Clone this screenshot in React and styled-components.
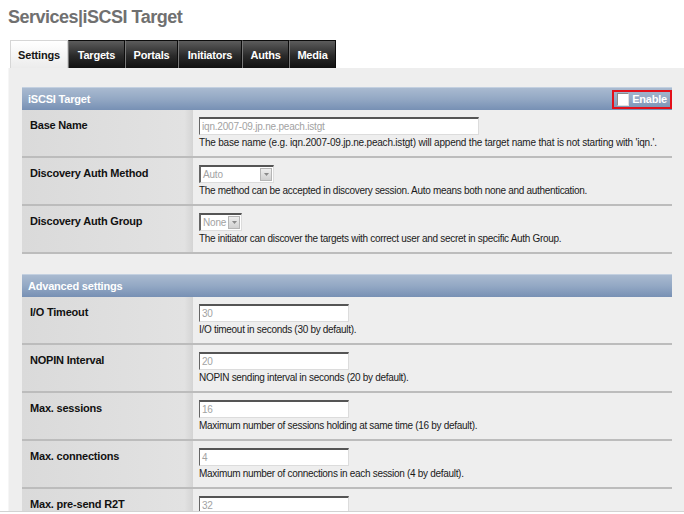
import { createGlobalStyle, styled } from "styled-components";

const GlobalStyle = createGlobalStyle`
  html, body {
    margin: 0;
    padding: 0;
    background: #fff;
  }
  body {
    font-family: "Liberation Sans", Arial, sans-serif;
  }
`;

const Page = styled.div`
  width: 684px;
  height: 512px;
  overflow: hidden;
  border-bottom: 1px solid #d2d2d2;
  box-sizing: border-box;
`;

const Title = styled.h1`
  margin: 0;
  padding: 7px 0 0 8px;
  height: 40px;
  box-sizing: border-box;
  font-size: 18px;
  letter-spacing: -0.5px;
  font-weight: bold;
  color: #707070;
`;

const TabBar = styled.div`
  display: flex;
  margin-left: 10px;
  height: 28px;
`;

const Tab = styled.div`
  display: flex;
  align-items: center;
  justify-content: center;
  width: ${(p) => p.$width}px;
  height: 28px;
  box-sizing: border-box;
  font-size: 11px;
  letter-spacing: -0.2px;
  font-weight: bold;
  color: ${(p) => (p.$active ? "#151515" : "#fff")};
  background: ${(p) =>
    p.$active
      ? "linear-gradient(#ffffff, #ececec)"
      : "linear-gradient(#5c5c5c, #2a2a2a 55%, #111111)"};
  border: 1px solid ${(p) => (p.$active ? "#d6d6d6" : "#0c0c0c")};
  border-bottom: none;
  border-left-color: ${(p) => (p.$active ? "#d6d6d6" : "#777")};
`;

const Panel = styled.div`
  margin-left: 8px;
  background: #eeeeee;
  border-left: 1px solid #f6f6f6;
  padding: 19px 12px 0 13px;
  height: 100%;
`;

const SectionHeader = styled.div`
  display: flex;
  align-items: center;
  justify-content: space-between;
  height: 22px;
  margin-top: ${(p) => (p.$gap ? "20px" : "0")};
  background: linear-gradient(#a9bad0, #93a8c4 50%, #7790b4);
  border-top: 1px solid #c3d0e0;
  color: #fff;
  font-size: 11px;
  letter-spacing: -0.2px;
  font-weight: bold;
  padding-left: 6px;
`;

const EnableBox = styled.label`
  display: flex;
  align-items: center;
  gap: 3px;
  height: 15px;
  padding: 0 3px 0 3px;
  border: 2px solid #e3101a;
  color: #fff;
  font-size: 11px;
  font-weight: bold;
`;

const CheckBox = styled.span`
  width: 10px;
  height: 11px;
  background: #fff;
  border: 1px solid #8a8a8a;
  border-right-color: #e0e0e0;
  border-bottom-color: #e0e0e0;
`;

const Row = styled.div`
  display: grid;
  grid-template-columns: 171px 1fr;
  border-bottom: 2px solid #bcbcbc;
`;

const Label = styled.div`
  padding: 9px 8px;
  font-size: 11px;
  letter-spacing: -0.2px;
  font-weight: bold;
  color: #111;
  background: linear-gradient(90deg, #dadada, #e2e2e2 95%, #d4d4d4);
`;

const Value = styled.div`
  padding: 7px 6px 7px 6px;
  display: flex;
  flex-direction: column;
  align-items: flex-start;
`;

const TextInput = styled.div`
  width: ${(p) => p.$width}px;
  height: 18px;
  box-sizing: border-box;
  background: #fff;
  border: 1px solid #dcdcdc;
  border-top: 2px solid #555;
  border-left: 1px solid #666;
  padding-left: 2px;
  font-size: 10px;
  letter-spacing: -0.2px;
  line-height: 15px;
  color: #a2a2a2;
`;

const Select = styled.div`
  display: flex;
  align-items: center;
  width: ${(p) => p.$width}px;
  height: 18px;
  box-sizing: border-box;
  background: #fff;
  border: 1px solid #dcdcdc;
  border-top: 2px solid #555;
  border-left: 2px solid #666;
  font-size: 10px;
  letter-spacing: -0.2px;
  color: #a2a2a2;
`;

const SelectText = styled.span`
  flex: 1;
  padding-left: 2px;
`;

const SelectButton = styled.span`
  width: 12px;
  height: 13px;
  margin-right: 1px;
  display: flex;
  align-items: center;
  justify-content: center;
  background: linear-gradient(#eeeeee, #d0d0d0);
  border: 1px solid #b5b5b5;
  box-sizing: border-box;
`;

const Hint = styled.div`
  margin-top: 2px;
  font-size: 10px;
  letter-spacing: ${(p) => (p.$loose ? "-0.2px" : "-0.3px")};
  line-height: 12px;
  color: #1a1a1a;
  white-space: nowrap;
`;

const Arrow = () => (
  <svg width="5" height="3" viewBox="0 0 5 3">
    <path d="M0 0h5L2.5 3z" fill="#8a8a8a" />
  </svg>
);

const Field = ({ label, children, hint, loose }) => (
  <Row>
    <Label>{label}</Label>
    <Value>
      {children}
      {hint && <Hint $loose={loose}>{hint}</Hint>}
    </Value>
  </Row>
);

const tabs = [
  { name: "Settings", width: 58, active: true },
  { name: "Targets", width: 57 },
  { name: "Portals", width: 53 },
  { name: "Initiators", width: 64 },
  { name: "Auths", width: 47 },
  { name: "Media", width: 47 },
];

// last row runs past the bottom of the window, so its hint isn't shown
const advanced = [
  { label: "I/O Timeout", value: "30", hint: "I/O timeout in seconds (30 by default)." },
  { label: "NOPIN Interval", value: "20", hint: "NOPIN sending interval in seconds (20 by default)." },
  { label: "Max. sessions", value: "16", hint: "Maximum number of sessions holding at same time (16 by default)." },
  { label: "Max. connections", value: "4", hint: "Maximum number of connections in each session (4 by default)." },
  { label: "Max. pre-send R2T", value: "32" },
];

export default function App() {
  return (
    <Page>
      <GlobalStyle />
      <Title>Services|iSCSI Target</Title>
      <TabBar>
        {tabs.map((t) => (
          <Tab key={t.name} $width={t.width} $active={t.active}>
            {t.name}
          </Tab>
        ))}
      </TabBar>
      <Panel>
        <SectionHeader>
          iSCSI Target
          <EnableBox>
            <CheckBox />
            Enable
          </EnableBox>
        </SectionHeader>
        <Field
          label="Base Name"
          loose
          hint="The base name (e.g. iqn.2007-09.jp.ne.peach.istgt) will append the target name that is not starting with 'iqn.'."
        >
          <TextInput $width={280}>iqn.2007-09.jp.ne.peach.istgt</TextInput>
        </Field>
        <Field
          label="Discovery Auth Method"
          hint="The method can be accepted in discovery session. Auto means both none and authentication."
        >
          <Select $width={75}>
            <SelectText>Auto</SelectText>
            <SelectButton>
              <Arrow />
            </SelectButton>
          </Select>
        </Field>
        <Field
          label="Discovery Auth Group"
          hint="The initiator can discover the targets with correct user and secret in specific Auth Group."
        >
          <Select $width={43}>
            <SelectText>None</SelectText>
            <SelectButton>
              <Arrow />
            </SelectButton>
          </Select>
        </Field>

        <SectionHeader $gap>Advanced settings</SectionHeader>
        {advanced.map((f) => (
          <Field key={f.label} label={f.label} hint={f.hint}>
            <TextInput $width={150}>{f.value}</TextInput>
          </Field>
        ))}
      </Panel>
    </Page>
  );
}
